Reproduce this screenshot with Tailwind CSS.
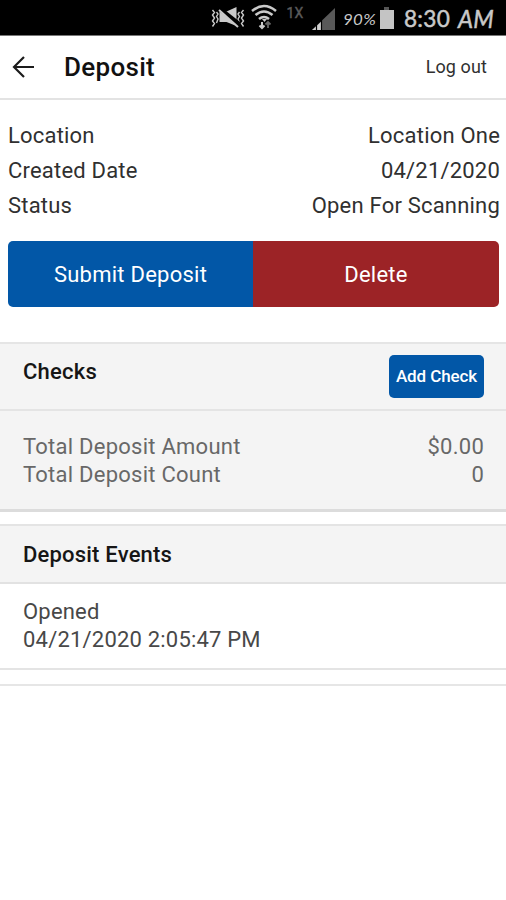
<!DOCTYPE html>
<html lang="en">
<head>
<meta charset="utf-8">
<title>Deposit</title>
<script src="https://cdn.jsdelivr.net/npm/@tailwindcss/browser@4"></script>
</head>
<body class="bg-white font-['Roboto',sans-serif] text-[22px] tracking-[0.25px] text-[#303030]">
<div class="h-[900px] w-[506px] overflow-hidden">
  <div class="flex h-9 justify-end border-b border-[#777] bg-black pr-[11px] text-[#c9c9c9]">
    <svg class="h-[35px] w-[128px]" viewBox="0 0 128 35" fill="none" stroke="#c9c9c9">
      <path d="M1.500 10l2 2.500-2 2.500 2 3-2 3 2 2.500-2 3M5.500 12l1.500 2-1.500 2.500 1.500 2.500-1.500 4M28.500 12l-1.500 2 1.500 2.500-1.500 2.500 1.500 4M32.500 10l-2 2.500 2 2.500-2 3 2 3-2 2.500 2 3" stroke-width="1.400"/>
      <path d="M8.500 12h6l11-5v19l-10-4h-7z" fill="#c9c9c9" stroke="none"/>
      <path d="M9 9l19 15" stroke="#000" stroke-width="4.500"/><path d="M8 10l19 17" stroke-width="2"/>
      <path d="M41 11q12-10 24 0M44.500 15q8.500-7 17 0M48 19q5-4 10 0" stroke-width="2.600"/>
      <path d="M51 19h5l-2.500 3z" fill="#c9c9c9" stroke="none"/>
      <path d="M51 22v6M48.500 25.500l2.500 2.500 2.500-2.500" stroke-width="2"/><path d="M57 28v-6M54.500 24.500l2.500-2.500 2.500 2.500" stroke="#666" stroke-width="1.800"/>
      <text x="75.500" y="18" fill="#5b5b5b" stroke="#5b5b5b" stroke-width="0.400" font-size="14" textLength="17" font-family="Roboto, sans-serif">1X</text>
      <path d="M101 30L124 8v22z" fill="#595959" stroke="none"/>
      <path d="M101 30l10-9v9z" fill="#d0d0d0" stroke="none"/><path d="M105.500 22v9M110.500 20v11" stroke="#000" stroke-width="1.200"/>
    </svg>
    <svg class="h-[35px] w-[156px]" viewBox="0 0 156 35" fill="#c9c9c9">
      <text x="4" y="25" font-size="16" font-style="italic" textLength="33" lengthAdjust="spacingAndGlyphs" font-family="Lato, sans-serif">90%</text>
      <path d="M45 7h5v3h5v19H41V10h4z" fill="#c4c4c4"/><path d="M45 7h5v3h-5z" fill="#555"/>
      <text x="65" y="27" font-size="23" stroke="#c9c9c9" stroke-width="0.500" textLength="46" lengthAdjust="spacingAndGlyphs" font-family="Lato, sans-serif">8:30</text>
      <text x="119" y="28" font-size="25" stroke="#c9c9c9" stroke-width="0.500" font-style="italic" textLength="36" lengthAdjust="spacingAndGlyphs" font-family="Lato, sans-serif">AM</text>
    </svg>
  </div>

  <header class="flex h-16 items-center border-b-2 border-[#e3e3e3] pr-[19px] pb-px pl-3">
    <svg class="h-[22px] w-[23px]" viewBox="0 0 23 22" fill="none" stroke="#1c1c1c" stroke-width="2.200"><path d="M22 11H2M12 1L2 11l10 10"/></svg>
    <h1 class="ml-[29px] flex-1 text-[26px] leading-8 font-medium tracking-[0.3px] text-[#111]">Deposit</h1>
    <a class="text-[18px] leading-6 tracking-[0.1px]">Log out</a>
  </header>

  <div class="pt-[18px] pr-[6px] pl-2 leading-[35px] tracking-[0.2px]">
    <div class="flex justify-between"><span>Location</span><span>Location One</span></div>
    <div class="flex justify-between"><span>Created Date</span><span>04/21/2020</span></div>
    <div class="flex justify-between"><span>Status</span><span>Open For Scanning</span></div>
  </div>

  <div class="mr-[7px] ml-2 mt-[18px] flex h-[66px] overflow-hidden rounded-[5px] text-white">
    <button class="w-[245px] bg-[#0257a7]">Submit Deposit</button>
    <button class="flex-1 bg-[#9c2326]">Delete</button>
  </div>

  <section class="mt-[35px] border-t-2 border-b-[3px] border-t-[#e5e5e5] border-b-[#dcdcdc] bg-[#f4f4f4]">
    <div class="flex h-[67px] justify-between border-b-2 border-[#e4e4e4] pt-[11px] pr-[22px] pl-[23px]">
      <h2 class="pt-0.5 leading-[30px] font-medium text-[#161616]">Checks</h2>
      <button class="h-[43px] w-[95px] rounded-[5px] bg-[#0257a7] pt-px text-[17px] font-medium tracking-[-0.1px] text-white">Add Check</button>
    </div>
    <div class="h-[98px] pt-[22px] pr-[22px] pl-[23px] leading-7 text-[#686868]">
      <div class="flex justify-between"><span>Total Deposit Amount</span><span>$0.00</span></div>
      <div class="flex justify-between"><span>Total Deposit Count</span><span>0</span></div>
    </div>
  </section>

  <section class="mt-3 border-y-2 border-[#e4e4e4]">
    <h2 class="h-[58px] border-b-2 border-[#e2e2e2] bg-[#f4f4f4] px-[23px] leading-[57px] font-medium tracking-[0.2px] text-[#161616]">Deposit Events</h2>
    <div class="h-[84px] px-[23px] pt-[14px] leading-7 tracking-[0.2px] text-[#484848]">
      <div>Opened</div>
      <div>04/21/2020 2:05:47 PM</div>
    </div>
  </section>
  <div class="mt-[14px] h-0.5 bg-[#e6e6e6]"></div>
</div>
</body>
</html>
